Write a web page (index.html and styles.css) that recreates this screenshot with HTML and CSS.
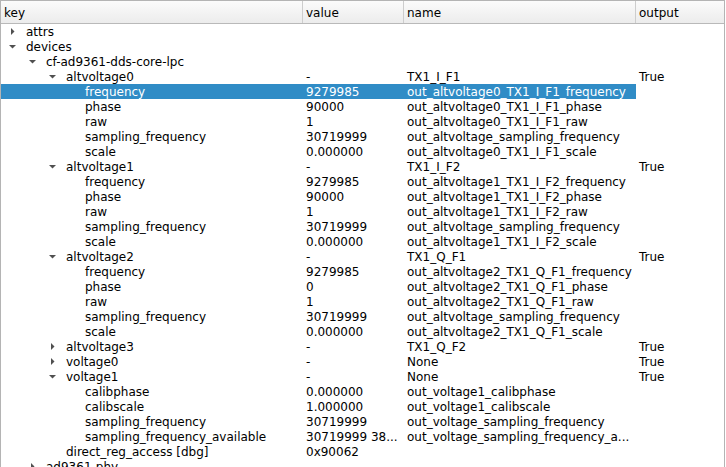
FILE: index.html
```html
<!DOCTYPE html>
<html>
<head>
<meta charset="utf-8">
<link rel="stylesheet" href="styles.css">
</head>
<body>
<div class="tree">
  <div class="header">
    <div class="hcell c-key">key</div>
    <div class="hcell c-val">value</div>
    <div class="hcell c-name">name</div>
    <div class="hcell c-out">output</div>
  </div>
  <div class="rows">
    <div class="row"><div class="cell c-key l0"><span class="tw"><svg viewBox="0 0 7 7"><polygon points="2,0 5.5,3.5 2,7"/></svg></span>attrs</div><div class="cell c-val"></div><div class="cell c-name"></div><div class="cell c-out"></div></div>
    <div class="row"><div class="cell c-key l0"><span class="tw"><svg viewBox="0 0 7 7"><polygon points="0,2 7,2 3.5,5.5"/></svg></span>devices</div><div class="cell c-val"></div><div class="cell c-name"></div><div class="cell c-out"></div></div>
    <div class="row"><div class="cell c-key l1"><span class="tw"><svg viewBox="0 0 7 7"><polygon points="0,2 7,2 3.5,5.5"/></svg></span>cf-ad9361-dds-core-lpc</div><div class="cell c-val"></div><div class="cell c-name"></div><div class="cell c-out"></div></div>

    <div class="row"><div class="cell c-key l2"><span class="tw"><svg viewBox="0 0 7 7"><polygon points="0,2 7,2 3.5,5.5"/></svg></span>altvoltage0</div><div class="cell c-val">-</div><div class="cell c-name">TX1_I_F1</div><div class="cell c-out">True</div></div>
    <div class="row selected"><div class="cell c-key l3"><span class="tw"></span>frequency</div><div class="cell c-val">9279985</div><div class="cell c-name">out_altvoltage0_TX1_I_F1_frequency</div><div class="cell c-out"></div></div>
    <div class="row"><div class="cell c-key l3"><span class="tw"></span>phase</div><div class="cell c-val">90000</div><div class="cell c-name">out_altvoltage0_TX1_I_F1_phase</div><div class="cell c-out"></div></div>
    <div class="row"><div class="cell c-key l3"><span class="tw"></span>raw</div><div class="cell c-val">1</div><div class="cell c-name">out_altvoltage0_TX1_I_F1_raw</div><div class="cell c-out"></div></div>
    <div class="row"><div class="cell c-key l3"><span class="tw"></span>sampling_frequency</div><div class="cell c-val">30719999</div><div class="cell c-name">out_altvoltage_sampling_frequency</div><div class="cell c-out"></div></div>
    <div class="row"><div class="cell c-key l3"><span class="tw"></span>scale</div><div class="cell c-val">0.000000</div><div class="cell c-name">out_altvoltage0_TX1_I_F1_scale</div><div class="cell c-out"></div></div>

    <div class="row"><div class="cell c-key l2"><span class="tw"><svg viewBox="0 0 7 7"><polygon points="0,2 7,2 3.5,5.5"/></svg></span>altvoltage1</div><div class="cell c-val">-</div><div class="cell c-name">TX1_I_F2</div><div class="cell c-out">True</div></div>
    <div class="row"><div class="cell c-key l3"><span class="tw"></span>frequency</div><div class="cell c-val">9279985</div><div class="cell c-name">out_altvoltage1_TX1_I_F2_frequency</div><div class="cell c-out"></div></div>
    <div class="row"><div class="cell c-key l3"><span class="tw"></span>phase</div><div class="cell c-val">90000</div><div class="cell c-name">out_altvoltage1_TX1_I_F2_phase</div><div class="cell c-out"></div></div>
    <div class="row"><div class="cell c-key l3"><span class="tw"></span>raw</div><div class="cell c-val">1</div><div class="cell c-name">out_altvoltage1_TX1_I_F2_raw</div><div class="cell c-out"></div></div>
    <div class="row"><div class="cell c-key l3"><span class="tw"></span>sampling_frequency</div><div class="cell c-val">30719999</div><div class="cell c-name">out_altvoltage_sampling_frequency</div><div class="cell c-out"></div></div>
    <div class="row"><div class="cell c-key l3"><span class="tw"></span>scale</div><div class="cell c-val">0.000000</div><div class="cell c-name">out_altvoltage1_TX1_I_F2_scale</div><div class="cell c-out"></div></div>

    <div class="row"><div class="cell c-key l2"><span class="tw"><svg viewBox="0 0 7 7"><polygon points="0,2 7,2 3.5,5.5"/></svg></span>altvoltage2</div><div class="cell c-val">-</div><div class="cell c-name">TX1_Q_F1</div><div class="cell c-out">True</div></div>
    <div class="row"><div class="cell c-key l3"><span class="tw"></span>frequency</div><div class="cell c-val">9279985</div><div class="cell c-name">out_altvoltage2_TX1_Q_F1_frequency</div><div class="cell c-out"></div></div>
    <div class="row"><div class="cell c-key l3"><span class="tw"></span>phase</div><div class="cell c-val">0</div><div class="cell c-name">out_altvoltage2_TX1_Q_F1_phase</div><div class="cell c-out"></div></div>
    <div class="row"><div class="cell c-key l3"><span class="tw"></span>raw</div><div class="cell c-val">1</div><div class="cell c-name">out_altvoltage2_TX1_Q_F1_raw</div><div class="cell c-out"></div></div>
    <div class="row"><div class="cell c-key l3"><span class="tw"></span>sampling_frequency</div><div class="cell c-val">30719999</div><div class="cell c-name">out_altvoltage_sampling_frequency</div><div class="cell c-out"></div></div>
    <div class="row"><div class="cell c-key l3"><span class="tw"></span>scale</div><div class="cell c-val">0.000000</div><div class="cell c-name">out_altvoltage2_TX1_Q_F1_scale</div><div class="cell c-out"></div></div>

    <div class="row"><div class="cell c-key l2"><span class="tw"><svg viewBox="0 0 7 7"><polygon points="2,0 5.5,3.5 2,7"/></svg></span>altvoltage3</div><div class="cell c-val">-</div><div class="cell c-name">TX1_Q_F2</div><div class="cell c-out">True</div></div>
    <div class="row"><div class="cell c-key l2"><span class="tw"><svg viewBox="0 0 7 7"><polygon points="2,0 5.5,3.5 2,7"/></svg></span>voltage0</div><div class="cell c-val">-</div><div class="cell c-name">None</div><div class="cell c-out">True</div></div>
    <div class="row"><div class="cell c-key l2"><span class="tw"><svg viewBox="0 0 7 7"><polygon points="0,2 7,2 3.5,5.5"/></svg></span>voltage1</div><div class="cell c-val">-</div><div class="cell c-name">None</div><div class="cell c-out">True</div></div>
    <div class="row"><div class="cell c-key l3"><span class="tw"></span>calibphase</div><div class="cell c-val">0.000000</div><div class="cell c-name">out_voltage1_calibphase</div><div class="cell c-out"></div></div>
    <div class="row"><div class="cell c-key l3"><span class="tw"></span>calibscale</div><div class="cell c-val">1.000000</div><div class="cell c-name">out_voltage1_calibscale</div><div class="cell c-out"></div></div>
    <div class="row"><div class="cell c-key l3"><span class="tw"></span>sampling_frequency</div><div class="cell c-val">30719999</div><div class="cell c-name">out_voltage_sampling_frequency</div><div class="cell c-out"></div></div>
    <div class="row"><div class="cell c-key l3"><span class="tw"></span>sampling_frequency_available</div><div class="cell c-val">30719999 38...</div><div class="cell c-name">out_voltage_sampling_frequency_a...</div><div class="cell c-out"></div></div>
    <div class="row"><div class="cell c-key l2"><span class="tw"></span>direct_reg_access [dbg]</div><div class="cell c-val">0x90062</div><div class="cell c-name"></div><div class="cell c-out"></div></div>
    <div class="row"><div class="cell c-key l1"><span class="tw"><svg viewBox="0 0 7 7"><polygon points="2,0 5.5,3.5 2,7"/></svg></span>ad9361-phy</div><div class="cell c-val"></div><div class="cell c-name"></div><div class="cell c-out"></div></div>
  </div>
</div>
</body>
</html>
```
FILE: styles.css
```css
html, body {
  margin: 0;
  padding: 0;
  background: #ffffff;
  overflow: hidden;
}
body {
  width: 726px;
  height: 467px;
  font-family: "DejaVu Sans", sans-serif;
  font-size: 12px;
  color: #000000;
}
.tree {
  width: 725px;
  height: 467px;
  box-sizing: border-box;
  border-left: 1px solid #b4b4b4;
  border-right: 1px solid #b4b4b4;
  border-top: 1px solid #b4b4b4;
  overflow: hidden;
  display: flex;
  flex-direction: column;
}
.header {
  display: flex;
  height: 23px;
  flex: none;
  background: linear-gradient(#fbfbfb, #ececec);
  border-bottom: 1px solid #b9b9b9;
  box-sizing: border-box;
}
.hcell {
  box-sizing: border-box;
  padding-left: 3px;
  padding-top: 1px;
  line-height: 22px;
  border-right: 1px solid #cdcdcd;
  white-space: nowrap;
  overflow: hidden;
}
.header .c-out {
  border-right: none;
}
.c-key { width: 302px; flex: none; }
.c-val { width: 101px; flex: none; }
.c-name { width: 232px; flex: none; }
.c-out { width: 88px; flex: none; }
.rows {
  display: flex;
  flex-direction: column;
  background: #ffffff;
}
.row {
  display: flex;
  height: 15px;
  flex: none;
}
.cell {
  box-sizing: border-box;
  height: 15px;
  padding-left: 3px;
  padding-top: 1px;
  line-height: 15px;
  white-space: nowrap;
  overflow: hidden;
}
.row .c-key {
  padding-left: 0;
}
.tw {
  display: inline-block;
  vertical-align: top;
  width: 25px;
  height: 15px;
  margin-top: -1px;
}
.l1 .tw { margin-left: 20px; }
.l2 .tw { margin-left: 40px; }
.l3 .tw { margin-left: 59px; }
.tw svg {
  display: block;
  width: 7px;
  height: 7px;
  margin-top: 4px;
  margin-left: 8px;
  fill: #505050;
}
.selected .c-key,
.selected .c-val,
.selected .c-name {
  background: #308cc6;
  color: #ffffff;
}
```
